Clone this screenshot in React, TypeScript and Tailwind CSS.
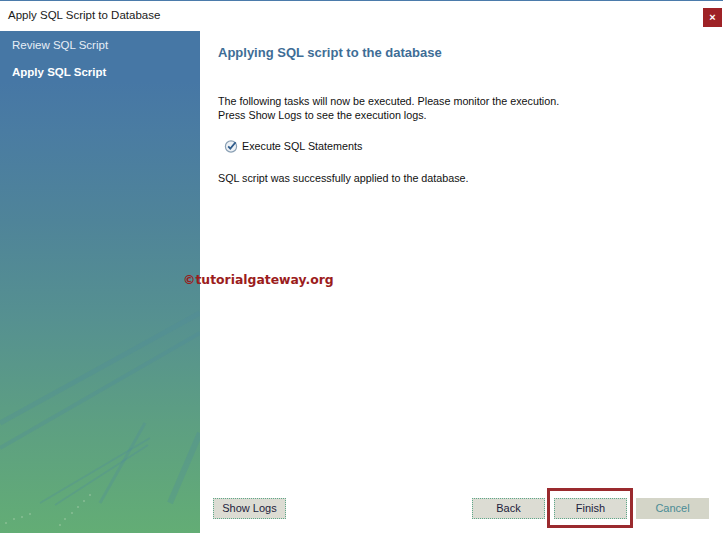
import React from 'react';

const ui = { fontFamily: '"Liberation Sans", Arial, sans-serif' };

const CheckCircle = () => (
  <svg width="14" height="14" viewBox="0 0 14 14">
    <circle cx="7" cy="7.5" r="5.6" fill="#eef2f6" stroke="#8aa0b4" strokeWidth="1.2" />
    <path d="M4.2 7.4 L6.3 9.6 L11.6 3.2" fill="none" stroke="#2f5c8c" strokeWidth="1.8" />
  </svg>
);

// faint diagonal streaks in the lower part of the sidebar
const Streaks = () => (
  <svg className="absolute left-0 bottom-0" width="200" height="260" viewBox="0 0 200 260">
    <g stroke="#4f8a9a" strokeOpacity="0.3" fill="none">
      <path d="M0 150 L200 40" strokeWidth="5" />
      <path d="M0 175 L200 60" strokeWidth="4" />
      <path d="M40 230 L150 165" strokeWidth="2" />
      <path d="M55 232 L148 172" strokeWidth="2" />
      <path d="M100 230 L145 150" strokeWidth="3" />
      <path d="M170 230 L200 160" strokeWidth="6" />
    </g>
    <g fill="#e8eedc" fillOpacity="0.6">
      <circle cx="60" cy="252" r="0.7" />
      <circle cx="65" cy="246" r="0.7" />
      <circle cx="72" cy="240" r="0.7" />
      <circle cx="78" cy="234" r="0.7" />
      <circle cx="84" cy="228" r="0.7" />
      <circle cx="90" cy="222" r="0.7" />
      <circle cx="6" cy="250" r="0.7" />
      <circle cx="14" cy="246" r="0.7" />
      <circle cx="22" cy="244" r="0.7" />
      <circle cx="30" cy="241" r="0.7" />
    </g>
  </svg>
);

const Btn = ({ label, muted }: { label: string; muted?: boolean }) => (
  <div
    className={
      muted
        ? 'w-[73px] h-[21px] flex items-center justify-center bg-[#d4d5c8] text-[#4a8c96] text-[11px]'
        : 'w-[73px] h-[21px] flex items-center justify-center bg-[#dcdcd3] border border-dotted border-[#5fa88a] text-[#1c1c3c] text-[11px]'
    }
  >
    {label}
  </div>
);

export default function App() {
  return (
    <div className="w-[723px] h-[533px] flex flex-col bg-white border-t border-[#4b7bab] overflow-hidden relative" style={ui}>
      <div className="h-[30px] flex items-center justify-between pl-2 pr-[1px]">
        <span className="text-[11.5px] text-[#1a1a1a]">Apply SQL Script to Database</span>
        <div className="w-[19px] h-[19px] mt-[2px] bg-[#9e2226] flex items-center justify-center text-white text-[11px] font-bold leading-none">
          ×
        </div>
      </div>

      <div className="flex-1 flex">
        <div className="w-[200px] relative bg-[linear-gradient(180deg,#4677a5_0%,#4677a5_10%,#4a7ca2_20%,#4f8499_38%,#569190_58%,#5d9f82_78%,#63ad75_100%)]">
          <div className="flex flex-col pl-3 pt-[7px] text-[11.5px] text-white">
            <span className="h-[14px] leading-[14px] text-[#e6eef6]">Review SQL Script</span>
            <span className="h-[14px] leading-[14px] mt-[13px] font-bold">Apply SQL Script</span>
          </div>
          <Streaks />
        </div>

        <div className="flex-1 flex flex-col">
          <div className="pl-[18px] pt-[14px] text-[10.75px] text-[#111]">
            <h1 className="text-[13px] leading-[16px] font-bold text-[#3e6d96]">Applying SQL script to the database</h1>
            <p className="mt-[33px] leading-[14px]">
              The following tasks will now be executed. Please monitor the execution.
              <br />
              Press Show Logs to see the execution logs.
            </p>
            <div className="mt-[17px] ml-[6px] flex items-center gap-[4px] leading-[14px]">
              <CheckCircle />
              <span>Execute SQL Statements</span>
            </div>
            <p className="mt-[18px] leading-[14px]">SQL script was successfully applied to the database.</p>
          </div>

          <div className="mt-auto mb-[14px] flex items-center pl-[13px] pr-[14px]">
            <Btn label="Show Logs" />
            <div className="ml-auto flex gap-[9px]">
              <Btn label="Back" />
              <div className="relative">
                <Btn label="Finish" />
                <div className="absolute left-[-7px] top-[-10px] w-[86px] h-[40px] border-[3px] border-[#9a2a2e]" />
              </div>
              <Btn label="Cancel" muted />
            </div>
          </div>
        </div>
      </div>

      <div
        className="absolute left-[183px] top-[271px] text-[12.4px] font-bold text-[#9b1c1c] leading-[16px]"
        style={{ fontFamily: '"DejaVu Sans", Verdana, sans-serif' }}
      >
        ©tutorialgateway.org
      </div>
    </div>
  );
}
